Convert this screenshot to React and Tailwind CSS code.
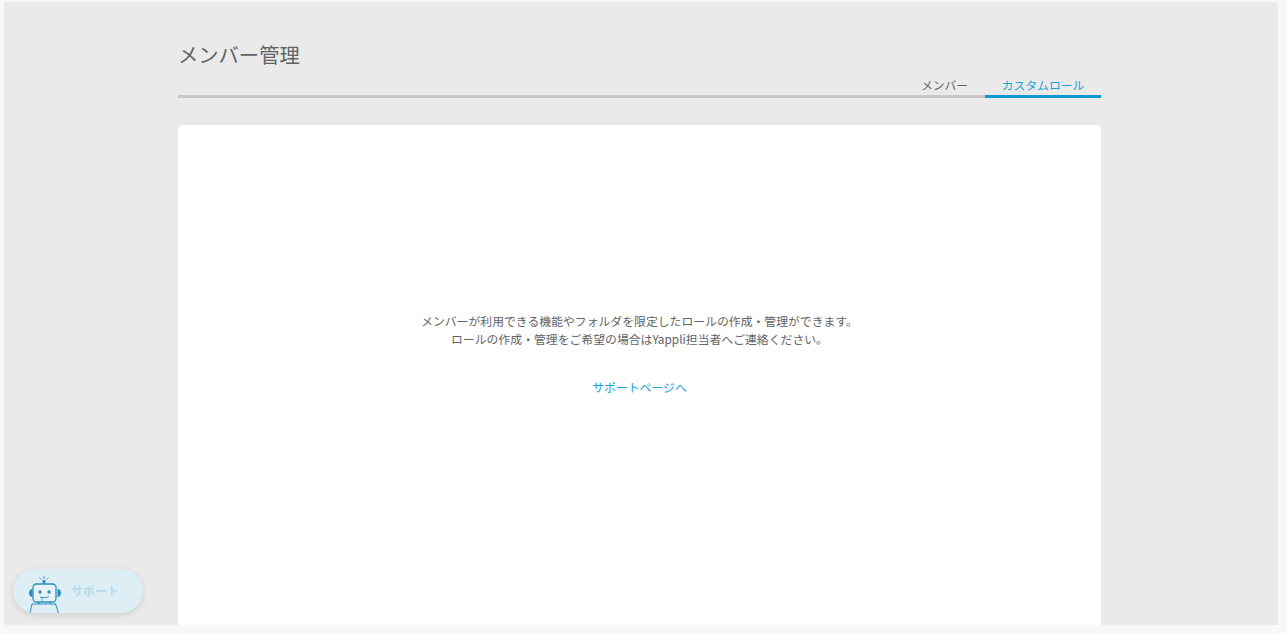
const JP = "font-['Noto_Sans_CJK_JP','Noto_Sans',sans-serif]"

const Robot = () => (
  <svg viewBox="0 0 34 37" className="h-[37px] w-[34px]" fill="none">
    <path d="M16 0v3M11.500 1.500l1.800 2M20.500 1.500l-1.800 2" stroke="#2a8fc0" strokeWidth="0.800" />
    <rect x="14.600" y="4" width="2.800" height="3.500" fill="#2a8fc0" />
    <path d="M4.500 13C2 13 1 15 1 17s1 4 3.500 4z" fill="#2a8fc0" />
    <path d="M29.500 13c2.500 0 3.500 2 3.500 4s-1 4-3.500 4z" fill="#2a8fc0" />
    <rect x="5" y="8" width="23" height="18" rx="3.500" fill="#e6f2f7" stroke="#2a8fc0" strokeWidth="1.300" />
    <circle cx="12" cy="16" r="1.700" fill="#2a8fc0" />
    <circle cx="21" cy="16" r="1.700" fill="#2a8fc0" />
    <path d="M12 21c3 1 6 1 9-.5" stroke="#2a8fc0" strokeWidth="1" />
    <path d="M14 21.500V26" stroke="#2a8fc0" strokeWidth="0.700" />
    <path d="M4 28h24M4 28L2 37M27.500 28l3 9M11 26v2M22 26v2" stroke="#2a8fc0" strokeWidth="1" />
  </svg>
)

const App = () => {
  return (
    <div className={`h-[633px] w-full overflow-hidden bg-[#f8f8f8] pl-1 pr-[9px] pt-0.5 pb-2 ${JP}`}>
      <div className="relative h-full overflow-hidden bg-[#eaeaea]">
        <div className="ml-[174px] w-[923px] pt-[37px]">
          <h1 className="text-[20.300px] leading-[30px] text-[#636363]">メンバー管理</h1>

          <div className="mt-[2px] flex h-[27px] justify-end border-b-[3px] border-[#c8c8c8] text-[11.800px]">
            <div className="flex h-[27px] w-[81px] items-center justify-center border-b-[3px] border-transparent pt-1 text-[#636363]">
              メンバー
            </div>
            <div className="flex h-[27px] w-[116px] items-center justify-center border-b-[3px] border-[#0f9bd1] pt-1 text-[#18a0d8]">
              カスタムロール
            </div>
          </div>

          <div className="mt-[27px] flex h-[600px] flex-col items-center rounded-[5px] bg-white pt-[187px] text-[11.850px] leading-[18px] text-[#636363]">
            <p>メンバーが利用できる機能やフォルダを限定したロールの作成・管理ができます。</p>
            <p>ロールの作成・管理をご希望の場合はYappli担当者へご連絡ください。</p>
            <a href="#" className="mt-[30px] text-[#18a0d8]">サポートページへ</a>
          </div>
        </div>

        <div className="absolute left-[9px] top-[567px] flex h-[44px] w-[130px] items-end overflow-hidden rounded-[22px] bg-[#deeef5] pl-[15px] shadow-[0_2px_6px_rgba(0,0,0,0.12)]">
          <Robot />
          <span className="mb-[13px] ml-[9px] text-[12px] font-bold leading-[18px] text-[#b5d9e8]">サポート</span>
        </div>
      </div>
    </div>
  )
}

export default App
